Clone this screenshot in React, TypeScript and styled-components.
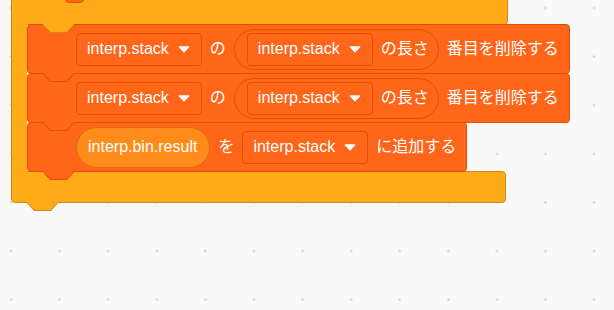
import React from 'react';
import styled, { createGlobalStyle, css } from 'styled-components';

const COLORS = {
  control: '#FFAB19',
  controlBorder: '#CF8B17',
  list: '#FF661A',
  listBorder: '#E64D00',
  variable: '#FF8C1A',
  variableBorder: '#DB6E00',
};

const GlobalStyle = createGlobalStyle`
  html, body { margin: 0; padding: 0; background: #f9f9f9; }
  body { font-family: "Liberation Sans", "Noto Sans CJK JP", sans-serif; }
`;

/* the connection tab that sticks out under a block */
const tab = (left: number, fill: string, border: string) => css`
  &::before,
  &::after {
    content: '';
    position: absolute;
    top: 100%;
    z-index: 3;
  }
  &::before {
    left: ${left}px;
    width: 33px;
    height: 9px;
    background: ${border};
    clip-path: polygon(0 0, 100% 0, calc(100% - 8px) 100%, 8px 100%);
  }
  &::after {
    left: ${left + 1}px;
    width: 31px;
    height: 8px;
    background: ${fill};
    clip-path: polygon(0 0, 100% 0, calc(100% - 7.6px) 100%, 7.6px 100%);
  }
`;

const Workspace = styled.div`
  position: relative;
  width: 100vw;
  height: 100vh;
  overflow: hidden;
  background-color: #f9f9f9;
  background-image: radial-gradient(circle, #d2d2d2 0.9px, transparent 1.5px);
  background-size: 48.6px 48.6px;
  background-position: -13.3px -16.3px;
`;

const Script = styled.div`
  position: absolute;
  left: 11px;
  top: -31px;
  display: flex;
  flex-direction: column;
  align-items: flex-start;
  font-family: "Liberation Sans", "Noto Sans CJK JP", sans-serif;
  font-size: 16px;
  color: #fff;
`;

const TopArm = styled.div`
  position: relative;
  box-sizing: border-box;
  width: 497px;
  height: 56px;
  display: flex;
  align-items: flex-end;
  padding: 0 0 21px 53px;
  background: ${COLORS.control};
  border: 1px solid ${COLORS.controlBorder};
  border-radius: 4px 4px 4px 0;
  ${tab(30, COLORS.control, COLORS.controlBorder)}
`;

const HeaderSlot = styled.div`
  box-sizing: border-box;
  width: 19px;
  height: 10px;
  background: ${COLORS.list};
  border: 1px solid ${COLORS.listBorder};
  border-radius: 0 0 4px 4px;
`;

const Middle = styled.div`
  display: flex;
  align-items: stretch;
  margin-top: -1px;
`;

const LeftColumn = styled.div`
  position: relative;
  z-index: 1;
  box-sizing: border-box;
  flex: none;
  width: 16px;
  background: ${COLORS.control};
  border-left: 1px solid ${COLORS.controlBorder};
`;

const Stack = styled.div`
  position: relative;
  z-index: 1;
  display: flex;
  flex-direction: column;
  align-items: flex-start;
`;

const Block = styled.div`
  position: relative;
  box-sizing: border-box;
  height: 50px;
  display: flex;
  align-items: center;
  gap: 8px;
  padding: 0 10px 0 48px;
  background: ${COLORS.list};
  border: 1px solid ${COLORS.listBorder};
  border-radius: 4px;
  white-space: nowrap;
  & + & {
    margin-top: -1px;
  }
  ${tab(14, COLORS.list, COLORS.listBorder)}
`;

const BottomArm = styled.div`
  position: relative;
  box-sizing: border-box;
  width: 495px;
  height: 32px;
  margin-top: -1px;
  background: ${COLORS.control};
  border: 1px solid ${COLORS.controlBorder};
  border-radius: 0 4px 4px 4px;
  ${tab(14, COLORS.control, COLORS.controlBorder)}
`;

const Label = styled.span`
  line-height: 1;
  white-space: nowrap;
`;

const DropdownBox = styled.div`
  box-sizing: border-box;
  height: 33px;
  display: flex;
  align-items: center;
  gap: 9px;
  padding: 0 11px 0 10px;
  background: ${COLORS.list};
  border: 1px solid ${COLORS.listBorder};
  border-radius: 4px;
`;

const Reporter = styled.div<{ $variable?: boolean }>`
  box-sizing: border-box;
  height: 41px;
  display: flex;
  align-items: center;
  gap: 8px;
  padding: ${(p) => (p.$variable ? '0 12px 0 11px' : '0 9px 0 12px')};
  background: ${(p) => (p.$variable ? COLORS.variable : COLORS.list)};
  border: 1px solid ${(p) => (p.$variable ? COLORS.variableBorder : COLORS.listBorder)};
  border-radius: 21px;
`;

const Arrow = () => (
  <svg width="12" height="7" viewBox="0 0 12 7" aria-hidden="true">
    <path
      d="M1.2 0.9 H10.8 L6 5.9 Z"
      fill="#fff"
      stroke="#fff"
      strokeWidth="1.2"
      strokeLinejoin="round"
    />
  </svg>
);

const Dropdown = ({ label }: { label: string }) => (
  <DropdownBox>
    <Label>{label}</Label>
    <Arrow />
  </DropdownBox>
);

const DeleteBlock = () => (
  <Block>
    <Dropdown label="interp.stack" />
    <Label>の</Label>
    <Reporter>
      <Dropdown label="interp.stack" />
      <Label>の長さ</Label>
    </Reporter>
    <Label>番目を削除する</Label>
  </Block>
);

export default function App() {
  return (
    <Workspace>
      <GlobalStyle />
      <Script>
        <TopArm>
          <HeaderSlot />
        </TopArm>
        <Middle>
          <LeftColumn />
          <Stack>
            <DeleteBlock />
            <DeleteBlock />
            <Block>
              <Reporter $variable>
                <Label>interp.bin.result</Label>
              </Reporter>
              <Label>を</Label>
              <Dropdown label="interp.stack" />
              <Label>に追加する</Label>
            </Block>
          </Stack>
        </Middle>
        <BottomArm />
      </Script>
    </Workspace>
  );
}
